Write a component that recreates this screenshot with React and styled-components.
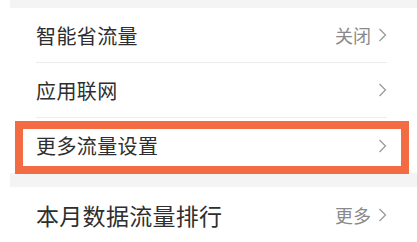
import React from "react";
import styled, { createGlobalStyle } from "styled-components";

const Global = createGlobalStyle`
  html, body {
    margin: 0;
    padding: 0;
    background: #ffffff;
  }
  body {
    font-family: "Noto Sans CJK SC", "Noto Sans", sans-serif;
    width: 417px;
    height: 242px;
    overflow: hidden;
  }
`;

const Page = styled.div`
  display: flex;
  flex-direction: column;
  width: 417px;
`;

const Gap = styled.div`
  height: ${(p) => p.h}px;
  margin-left: 10px;
  background: #f4f4f4;
`;

const Row = styled.div`
  position: relative;
  display: flex;
  align-items: center;
  justify-content: space-between;
  height: ${(p) => p.h || 54}px;
  margin: 0 30px 0 36px;
  border-bottom: ${(p) => (p.divider ? "1px solid #ececec" : "none")};
  box-sizing: border-box;
`;

const Label = styled.span`
  font-size: ${(p) => p.size || 20}px;
  color: #2e2e2e;
  letter-spacing: ${(p) => p.spacing || 0.4}px;
`;

const Right = styled.span`
  display: flex;
  align-items: center;
  gap: 7px;
  font-size: 18px;
  color: #8a8a8a;
`;

const Highlight = styled.div`
  position: absolute;
  left: -21px;
  right: -22px;
  top: 3px;
  bottom: -1px;
  border: 8px solid #f36b42;
  pointer-events: none;
`;

const Chevron = () => (
  <svg width="9" height="14" viewBox="0 0 9 14">
    <polyline
      points="1.5 1 7.5 7 1.5 13"
      fill="none"
      stroke="#9a9a9a"
      strokeWidth="1.3"
    />
  </svg>
);

export default function App() {
  return (
    <Page>
      <Global />
      <Gap h={8} />
      <Row divider h={55}>
        <Label>智能省流量</Label>
        <Right>
          关闭
          <Chevron />
        </Right>
      </Row>
      <Row divider h={55}>
        <Label>应用联网</Label>
        <Right>
          <Chevron />
        </Right>
      </Row>
      <Row h={55}>
        <Label>更多流量设置</Label>
        <Right>
          <Chevron />
        </Right>
        <Highlight />
      </Row>
      <Gap h={14} />
      <Row h={55}>
        <Label size={23} spacing={0.3}>本月数据流量排行</Label>
        <Right>
          更多
          <Chevron />
        </Right>
      </Row>
    </Page>
  );
}
